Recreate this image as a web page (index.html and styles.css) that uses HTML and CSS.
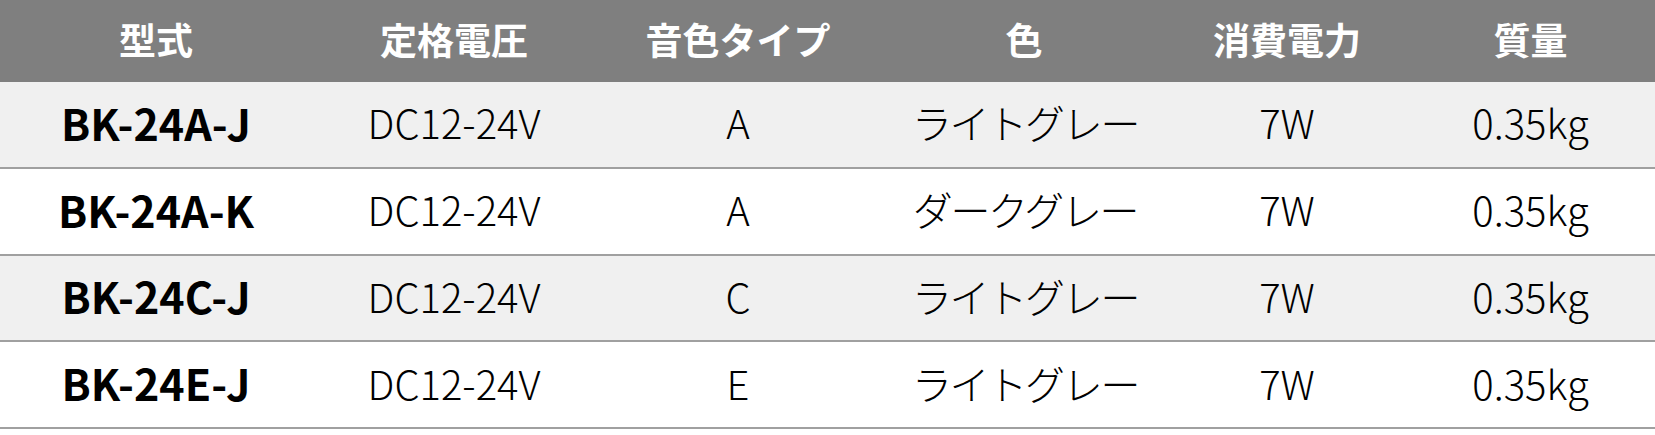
FILE: index.html
```html
<!DOCTYPE html>
<html lang="ja">
<head>
<meta charset="utf-8">
<title>仕様表</title>
<link rel="stylesheet" href="styles.css">
</head>
<body>
<table class="spec">
  <colgroup>
    <col class="c1"><col class="c2"><col class="c3"><col class="c4"><col class="c5"><col class="c6">
  </colgroup>
  <thead>
    <tr><th>型式</th><th>定格電圧</th><th>音色タイプ</th><th>色</th><th>消費電力</th><th>質量</th></tr>
  </thead>
  <tbody>
    <tr class="alt"><td class="model">BK-24A-J</td><td>DC12-24V</td><td>A</td><td class="kana">ライトグレー</td><td>7W</td><td>0.35kg</td></tr>
    <tr><td class="model">BK-24A-K</td><td>DC12-24V</td><td>A</td><td class="kana">ダークグレー</td><td>7W</td><td>0.35kg</td></tr>
    <tr class="alt"><td class="model">BK-24C-J</td><td>DC12-24V</td><td>C</td><td class="kana">ライトグレー</td><td>7W</td><td>0.35kg</td></tr>
    <tr><td class="model">BK-24E-J</td><td>DC12-24V</td><td>E</td><td class="kana">ライトグレー</td><td>7W</td><td>0.35kg</td></tr>
  </tbody>
</table>
</body>
</html>
```
FILE: styles.css
```css
html, body {
  margin: 0;
  padding: 0;
  background: #ffffff;
}
.spec {
  width: 1655px;
  table-layout: fixed;
  border-collapse: collapse;
  font-family: "Noto Sans CJK JP", "Noto Sans", sans-serif;
  color: #000;
}
.c1 { width: 312px; }
.c2 { width: 284px; }
.c3 { width: 284px; }
.c4 { width: 288px; }
.c5 { width: 238px; }
.c6 { width: 249px; }
.spec th {
  background: #7f7f7f;
  color: #fff;
  font-weight: 700;
  font-size: 37px;
  height: 82px;
  padding: 0 0 4px 0;
  box-sizing: border-box;
  text-align: center;
  vertical-align: middle;
  line-height: 1;
}
.spec td {
  height: 80.75px;
  padding: 0 0 4px 0;
  text-align: center;
  vertical-align: middle;
  font-size: 40px;
  font-weight: 300;
  line-height: 1;
  border-bottom: 2px solid #a0a0a0;
}
.spec tr.alt td {
  background: #f0f0f0;
}
.spec td.model {
  font-size: 43px;
  font-weight: 700;
}
.spec td.kana {
  letter-spacing: -2.3px;
  text-indent: 2px;
}
```
